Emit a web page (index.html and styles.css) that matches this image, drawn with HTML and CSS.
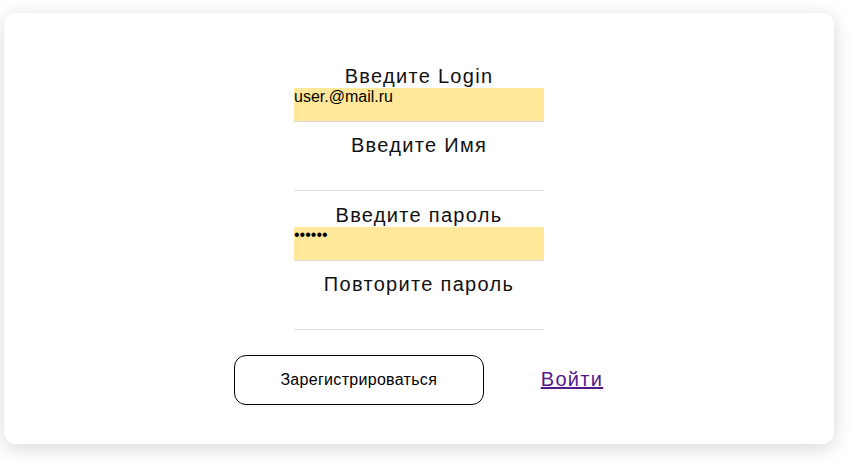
FILE: index.html
```html
<!DOCTYPE html>
<html lang="ru">
<head>
<meta charset="utf-8">
<title>Регистрация</title>
<link rel="stylesheet" href="styles.css">
</head>
<body>
<div class="page">
  <form class="card">
    <div class="fields">
      <label class="field">
        <span class="label">Введите Login</span>
        <input class="input filled" type="text" value="user.@mail.ru">
      </label>
      <label class="field">
        <span class="label">Введите Имя</span>
        <input class="input" type="text" value="">
      </label>
      <label class="field">
        <span class="label">Введите пароль</span>
        <input class="input filled" type="password" value="123456">
      </label>
      <label class="field">
        <span class="label">Повторите пароль</span>
        <input class="input" type="password" value="">
      </label>
    </div>
    <div class="actions">
      <button class="btn" type="button">Зарегистрироваться</button>
      <a class="link" href="#">Войти</a>
    </div>
  </form>
</div>
</body>
</html>
```

FILE: styles.css
```css
html, body {
  margin: 0;
  padding: 0;
  background: #ffffff;
  font-family: "Liberation Sans", Arial, sans-serif;
}

.page {
  padding: 13px 23px 20px 4px;
}

.card {
  width: 830px;
  height: 431px;
  box-sizing: border-box;
  background: #ffffff;
  border-radius: 12px;
  box-shadow: 0 4px 20px rgba(0, 0, 0, 0.16);
  padding-top: 52px;
  display: flex;
  flex-direction: column;
  align-items: center;
}

.fields {
  width: 250px;
  display: flex;
  flex-direction: column;
  gap: 12.3px;
}

.field {
  display: flex;
  flex-direction: column;
  align-items: stretch;
}

.label {
  display: block;
  text-align: center;
  font-size: 20px;
  line-height: 23px;
  letter-spacing: 1.3px;
  color: #111111;
}

.input {
  display: block;
  box-sizing: border-box;
  width: 250px;
  height: 34px;
  margin: 0;
  padding: 0 0 16px 0;
  border: none;
  border-bottom: 1px solid #dcdcdc;
  background: #ffffff;
  font-family: "Liberation Sans", Arial, sans-serif;
  font-size: 16px;
  line-height: 17px;
  color: #000000;
  outline: none;
}

.input.filled {
  background: #ffe899;
}

.actions {
  margin-top: 25px;
  display: flex;
  align-items: center;
  gap: 57px;
  margin-left: -1px;
}

.btn {
  width: 250px;
  height: 50px;
  box-sizing: border-box;
  background: #ffffff;
  border: 1px solid #000000;
  border-radius: 12px;
  font-family: "Liberation Sans", Arial, sans-serif;
  font-size: 16px;
  letter-spacing: 0.3px;
  color: #000000;
  padding: 0;
}

.link {
  font-size: 20px;
  letter-spacing: 1.3px;
  color: #551a8b;
  text-decoration: underline;
}
```
